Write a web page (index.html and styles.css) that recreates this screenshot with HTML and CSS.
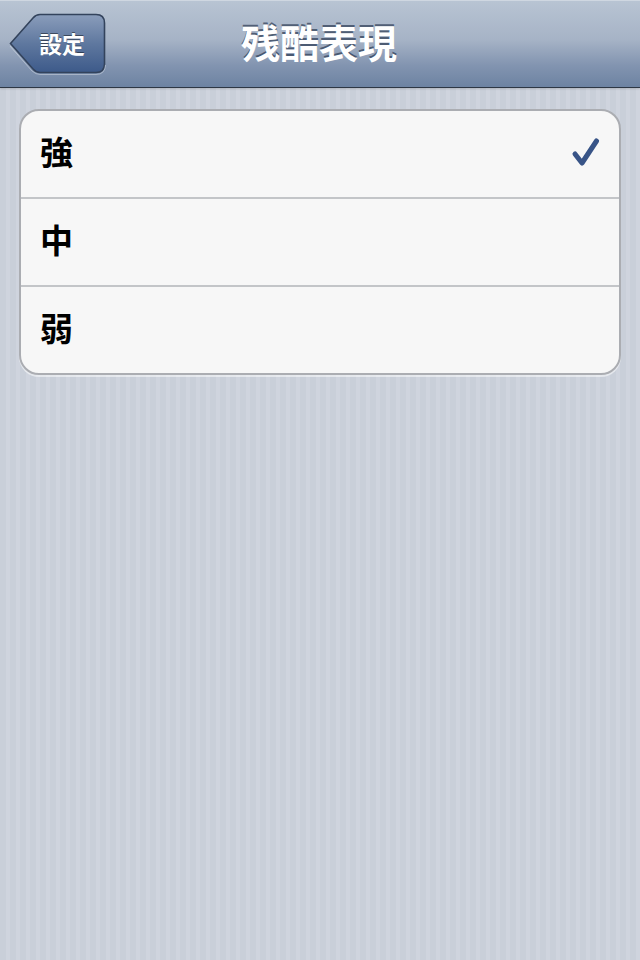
FILE: index.html
```html
<!DOCTYPE html>
<html lang="ja">
<head>
<meta charset="utf-8">
<link rel="stylesheet" href="styles.css">
</head>
<body>
<div class="screen">
  <header class="navbar">
    <a class="back">
      <svg class="back-shape" width="98" height="62" viewBox="0 0 98 62">
        <defs>
          <linearGradient id="bg" x1="0" y1="0" x2="0" y2="1">
            <stop offset="0" stop-color="#8a9dbb"/>
            <stop offset="0.5" stop-color="#5f789f"/>
            <stop offset="1" stop-color="#3d5a8a"/>
          </linearGradient>
        </defs>
        <path d="M1.5 30.5 L24 5 Q27 1.5 31 1.5 L87 1.5 Q95.5 1.5 95.5 10 L95.5 51 Q95.5 59.5 87 59.5 L31 59.5 Q27 59.5 24 56 Z" fill="url(#bg)" stroke="#33435c" stroke-width="1.6"/>
        <path d="M1 33 L23 58 Q27 61.5 31 61.5 L87 61.5 Q96 61.5 96.5 52" fill="none" stroke="rgba(255,255,255,0.35)" stroke-width="1"/>
      </svg>
      <span class="back-label">設定</span>
    </a>
    <h1 class="title">残酷表現</h1>
  </header>
  <main class="content">
    <ul class="group">
      <li class="row"><span class="label">強</span>
        <svg class="check" width="30" height="30" viewBox="0 0 30 30"><path d="M4 17 L11 26 L25.5 4" fill="none" stroke="#385487" stroke-width="5" stroke-linecap="round" stroke-linejoin="round"/></svg>
      </li>
      <li class="row"><span class="label">中</span></li>
      <li class="row"><span class="label">弱</span></li>
    </ul>
  </main>
</div>
</body>
</html>
```

FILE: styles.css
```css
html, body {
  margin: 0;
  padding: 0;
}
body {
  font-family: "Noto Sans CJK JP", "Noto Sans", sans-serif;
}
.screen {
  width: 640px;
  height: 960px;
  display: flex;
  flex-direction: column;
  background-color: #cbd1db;
  background-image: repeating-linear-gradient(to right, #c9cfd9 0px, #c9cfd9 6px, #cfd4de 6px, #cfd4de 10px);
  overflow: hidden;
}
.navbar {
  position: relative;
  flex: 0 0 auto;
  display: flex;
  align-items: center;
  justify-content: center;
  background: linear-gradient(to bottom, #b8c4d3 0%, #a6b3c6 45%, #8294b0 75%, #6d83a2 100%);
  border-top: 1px solid #cfd7e1;
  border-bottom: 1px solid #2d3744;
  box-sizing: border-box;
  height: 88px;
  box-shadow: 0 1px 2px rgba(0,0,0,0.15);
}
.back {
  position: absolute;
  left: 9px;
  top: 12px;
  width: 98px;
  height: 62px;
  display: flex;
  align-items: center;
}
.back-shape {
  position: absolute;
  left: 0;
  top: 0;
}
.back-label {
  position: relative;
  margin-left: 30px;
  margin-top: -2px;
  color: #fff;
  font-size: 23px;
  font-weight: 700;
  text-shadow: 0 -1px 0 rgba(0,0,0,0.45);
}
.title {
  margin: 0 0 0 -2px;
  color: #fff;
  font-size: 39px;
  font-weight: 700;
  line-height: 1;
  text-shadow: 0 -2px 0 rgba(40,55,80,0.7);
  padding-bottom: 6px;
}
.content {
  padding: 21px 19px 0 19px;
}
.group {
  list-style: none;
  margin: 0;
  padding: 0;
  background: #f7f7f7;
  border: 2px solid #abadb2;
  border-radius: 20px;
  box-shadow: 0 2px 0 rgba(255,255,255,0.5);
  overflow: hidden;
}
.row {
  height: 86px;
  display: flex;
  align-items: center;
  justify-content: space-between;
  padding: 0 18px 0 19px;
  border-bottom: 2px solid #c3c5c8;
}
.row:last-child {
  border-bottom: none;
}
.label {
  font-size: 33px;
  font-weight: 700;
  color: #000;
  line-height: 1;
  margin-top: -6px;
}
.check {
  display: block;
  margin-top: -4px;
}
```
